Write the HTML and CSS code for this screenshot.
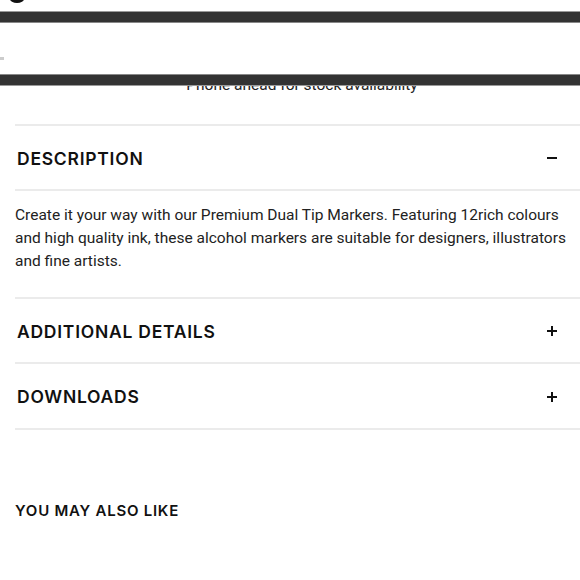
FILE: index.html
```html
<!DOCTYPE html>
<html lang="en">
<head>
<meta charset="utf-8">
<title>Product details</title>
<link rel="stylesheet" href="styles.css">
</head>
<body>
<div class="page">
  <div class="logo-stub"></div>
  <p class="notice">Phone ahead for stock availability</p>
  <div class="accordion">
    <div class="acc-item open">
      <div class="acc-head"><h2>DESCRIPTION</h2><span class="icon minus"></span></div>
      <div class="acc-body">
        <p>Create it your way with our Premium Dual Tip Markers. Featuring 12rich colours and high quality ink, these alcohol markers are suitable for designers, illustrators and fine artists.</p>
      </div>
    </div>
    <div class="acc-item">
      <div class="acc-head"><h2>ADDITIONAL DETAILS</h2><span class="icon plus"></span></div>
    </div>
    <div class="acc-item">
      <div class="acc-head"><h2>DOWNLOADS</h2><span class="icon plus"></span></div>
    </div>
  </div>
  <h3 class="related">YOU MAY ALSO LIKE</h3>
</div>
<div class="sticky-bar"><span class="mark"></span></div>
</body>
</html>
```
FILE: styles.css
```css
html, body {
  margin: 0;
  padding: 0;
  background: #fff;
}
body {
  width: 580px;
  height: 580px;
  overflow: hidden;
  position: relative;
  font-family: Roboto, "Liberation Sans", sans-serif;
  color: #222;
}
.logo-stub {
  width: 14px;
  height: 8px;
  margin-left: 10px;
  margin-top: -5px;
  background: #111;
  border-radius: 50%;
}
.notice {
  margin: 72px 0 0;
  padding-left: 24px;
  text-align: center;
  font-size: 15.5px;
  line-height: 20px;
  color: #222;
}
.accordion {
  margin: 29px 0 0 15px;
}
.acc-item {
  border-top: 2px solid #ebebeb;
}
.acc-item:last-child {
  border-bottom: 2px solid #ebebeb;
}
.acc-item:last-child .acc-head {
  height: 64px;
}
.acc-head {
  height: 63px;
  display: flex;
  align-items: center;
  justify-content: space-between;
  padding: 1px 23px 0 2px;
  box-sizing: border-box;
}
.acc-head h2 {
  margin: 0;
  font-family: Inter, "DejaVu Sans", sans-serif;
  font-weight: 600;
  font-size: 17.5px;
  letter-spacing: 0.75px;
  color: #111;
}
.icon {
  position: relative;
  width: 10px;
  height: 10px;
}
.icon::before, .icon::after {
  content: "";
  position: absolute;
  background: #111;
}
.icon::before {
  left: 0;
  top: 4px;
  width: 10px;
  height: 2px;
}
.plus::after {
  left: 4px;
  top: 0;
  width: 2px;
  height: 10px;
}
.minus::after {
  display: none;
}
.acc-body {
  border-top: 2px solid #ebebeb;
  padding: 13px 0 24px;
}
.acc-body p {
  margin: 0;
  font-size: 15.5px;
  line-height: 23px;
  color: #222;
  padding-right: 8px;
}
.related {
  margin: 71px 0 0 15px;
  font-family: Inter, "DejaVu Sans", sans-serif;
  font-weight: 600;
  font-size: 15px;
  letter-spacing: 0.75px;
  color: #111;
}
.sticky-bar {
  position: absolute;
  left: 0;
  top: 12px;
  width: 580px;
  height: 53px;
  background: #fff;
  border-top: 10px solid #333;
  border-bottom: 10px solid #333;
  box-shadow: inset 0 1px 0 #888, inset 0 -1px 0 #888, 0 -1px 0 #999, 0 1px 0 #999;
}
.mark {
  position: absolute;
  left: 0;
  top: 35px;
  width: 4px;
  height: 3px;
  background: #ccc;
}
```
